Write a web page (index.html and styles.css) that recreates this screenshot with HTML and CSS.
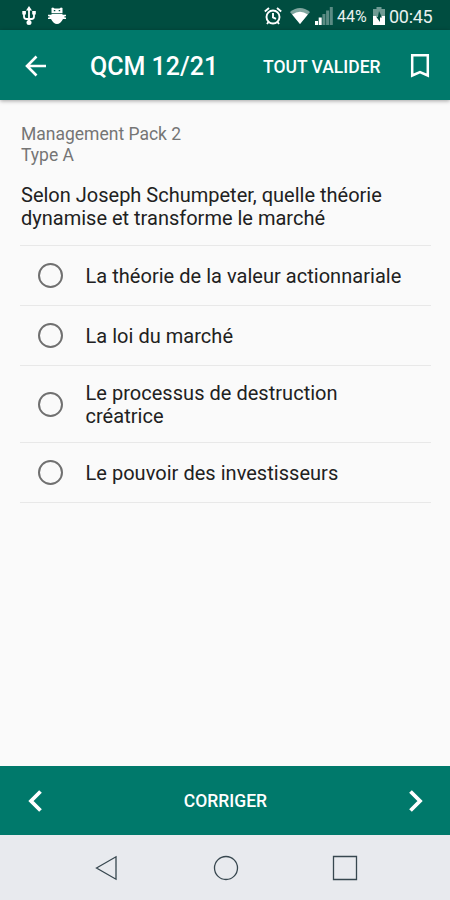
FILE: index.html
```
<!DOCTYPE html>
<html lang="fr">

	<head>
		<meta charset="UTF-8">
		<title>QCM 12/21</title>
		<link rel="stylesheet" href="styles.css">
	</head>

	<body>
		<div class="status">
			<svg class="usb" width="14" height="20" viewBox="0 0 14 20" fill="none" stroke="#fff" stroke-width="1.8">
				<path d="M7 3v13M2 7v3.500q0 2.500 2.500 2.500h5q2.500 0 2.500-2.500V7" />
				<path d="M7 0l3 4.500H4zM.3 5h3.600v3.600H.3zM10.200 5h3.600v3.600h-3.600z" fill="#fff" stroke="none" />
				<circle cx="7" cy="16.500" r="2.500" fill="#fff" stroke="none" />
			</svg>
			<svg class="bug" width="18" height="18" viewBox="0 0 18 18" fill="#fff">
				<path d="M3.500 6V1L5 .5l1.500 1h5l1.500-1 1.500.5v5zM3.500 6.700h11v1H18v1.600h-1.500v1.200H18V12h-3Q12.500 17 9 17T3 12H0v-1.500h1.500V9.300H0V7.700h3.500z" />
				<path d="M5.800 3h1.500v1.200H5.800zM10.700 3h1.500v1.200h-1.500z" fill="#004d40" />
			</svg>
			<svg class="alarm" width="18" height="18" viewBox="0 0 18 18" fill="none" stroke="#fff" stroke-width="1.900">
				<circle cx="9" cy="10" r="6.500" />
				<path d="M.8 4.500L5 1M17.200 4.500L13 1M9 6v4.300l3 1.500M4.500 15L3 17M13.500 15l1.500 2" />
			</svg>
			<svg class="wifi" width="20" height="16" viewBox="0 0 20 16">
				<path d="M0 4Q10-4 20 4L10 16z" fill="#80a69f" />
				<path d="M2.200 6.500Q10 1 17.800 6.500L10 16z" fill="#fff" />
			</svg>
			<svg class="signal" width="18" height="18" viewBox="0 0 18 18" fill="#5b8c84">
				<path d="M0 14h3v4H0zM3.700 10.500h3V18h-3z" fill="#fff" />
				<path d="M7.400 7h3v11h-3zM11.100 3.500h3V18h-3zM14.800 0h3v18h-3z" />
			</svg>
			<span class="percent">44%</span>
			<svg class="battery" width="12" height="18" viewBox="0 0 12 18">
				<path d="M3.500 0h5v2H12v8H0V2h3.500z" fill="#6f9b94" />
				<path d="M0 9h12v9H0z" fill="#fff" />
				<path d="M6 4l3 6.500H7V15L3 9.500h2z" fill="#004d40" />
			</svg>
			<span class="time">00:45</span>
		</div>

		<header class="appbar">
			<svg class="back" width="22" height="22" viewBox="0 0 22 22" fill="none" stroke="#fff" stroke-width="2.600">
				<path d="M21 11H2.500M11.500 1.500L2 11l9.500 9.500" />
			</svg>
			<h1>QCM 12/21</h1>
			<span class="validate">TOUT VALIDER</span>
			<svg class="bookmark" width="20" height="24" viewBox="0 0 20 24" fill="none" stroke="#fff" stroke-width="2.500">
				<path d="M2.200 1.200h15.600v20.300L10 18l-7.800 3.500z" />
			</svg>
		</header>

		<main>
			<div class="meta">Management Pack 2<br>Type A</div>
			<div class="question">Selon Joseph Schumpeter, quelle théorie<br>dynamise et transforme le marché</div>
			<ul class="answers">
				<li><i class="radio"></i><span>La théorie de la valeur actionnariale</span></li>
				<li><i class="radio"></i><span>La loi du marché</span></li>
				<li class="tall"><i class="radio"></i><span>Le processus de destruction<br>créatrice</span></li>
				<li><i class="radio"></i><span>Le pouvoir des investisseurs</span></li>
			</ul>
		</main>

		<footer class="actions">
			<svg width="14" height="22" viewBox="0 0 14 22" fill="none" stroke="#fff" stroke-width="3.800">
				<path d="M12.500 1.500L3 11l9.500 9.500" />
			</svg>
			<span class="correct">CORRIGER</span>
			<svg width="14" height="22" viewBox="0 0 14 22" fill="none" stroke="#fff" stroke-width="3.800">
				<path d="M1.500 1.500L11 11l-9.500 9.500" />
			</svg>
		</footer>

		<nav class="navbar">
			<svg width="26" height="26" viewBox="0 0 26 26"><path d="M2.500 13L22 1.800v22.400z" /></svg>
			<svg width="26" height="26" viewBox="0 0 26 26"><circle cx="13" cy="13" r="11.500" /></svg>
			<svg width="26" height="26" viewBox="0 0 26 26"><path d="M1.500 1.500h23v23h-23z" /></svg>
		</nav>
	</body>

</html>
```
FILE: styles.css
```
* {
	box-sizing: border-box;
}

body {
	display: flex;
	flex-direction: column;
	width: 450px;
	height: 900px;
	margin: 0;
	background: #fafafa;
	color: #212121;
	font-family: Roboto, sans-serif;
}

svg {
	display: block;
	flex: none;
}

.status {
	display: flex;
	align-items: center;
	height: 30px;
	padding: 1px 0 0 22px;
	background: #004d40;
	color: #e9f1ef;
	white-space: nowrap;
}

.bug {
	margin-left: 12px;
}

.alarm {
	margin-left: 198px;
}

.wifi {
	margin-left: 8px;
}

.signal {
	margin-left: 5px;
}

.percent {
	width: 31px;
	margin-left: 4px;
	padding-top: 1px;
	font-size: 16px;
}

.battery {
	margin-left: 5px;
}

.time {
	margin-left: 4px;
	padding-top: 1px;
	font-size: 18px;
	letter-spacing: -0.3px;
}

.appbar {
	display: flex;
	align-items: center;
	height: 70px;
	padding: 2px 20px 0 25px;
	background: #00796b;
	box-shadow: 0 1px 4px rgba(0, 0, 0, 0.35);
	color: #fff;
	white-space: nowrap;
}

h1 {
	width: 128px;
	margin: 0 0 0 43px;
	padding-top: 1px;
	font-size: 25px;
	font-weight: 500;
}

.validate {
	width: 120px;
	margin-left: 45px;
	padding-top: 1px;
	font-size: 17.5px;
	font-weight: 500;
}

.bookmark {
	margin-left: auto;
}

main {
	flex: 1;
	padding: 24px 19px 0 20px;
}

.meta {
	padding-left: 1px;
	color: #757575;
	font-size: 17.5px;
	line-height: 21px;
}

.question {
	margin-top: 18px;
	padding-left: 1px;
	font-size: 20px;
	line-height: 23px;
}

.answers {
	margin: 15px 0 0;
	padding: 0;
	border-top: 1px solid #e8e8e8;
	font-size: 20px;
	line-height: 23px;
	letter-spacing: 0.03px;
	list-style: none;
}

.answers li {
	display: flex;
	align-items: center;
	height: 60px;
	padding-left: 18px;
	border-bottom: 1px solid #e8e8e8;
}

.answers span {
	padding-top: 2px;
}

.answers .tall {
	height: 77px;
}

.radio {
	width: 25px;
	height: 25px;
	margin-right: 22.5px;
	border: 2px solid #707070;
	border-radius: 50%;
}

.actions {
	display: flex;
	justify-content: space-between;
	align-items: center;
	height: 69px;
	padding: 0 27px 0 28px;
	background: #00796b;
	color: #fff;
}

.correct {
	padding-top: 1px;
	font-size: 17.5px;
	font-weight: 500;
}

.navbar {
	display: flex;
	justify-content: center;
	align-items: center;
	gap: 93px;
	height: 65px;
	padding-left: 1px;
	background: #e8eaee;
}

.navbar svg {
	fill: none;
	stroke: #37474f;
	stroke-width: 1.3;
}
```
